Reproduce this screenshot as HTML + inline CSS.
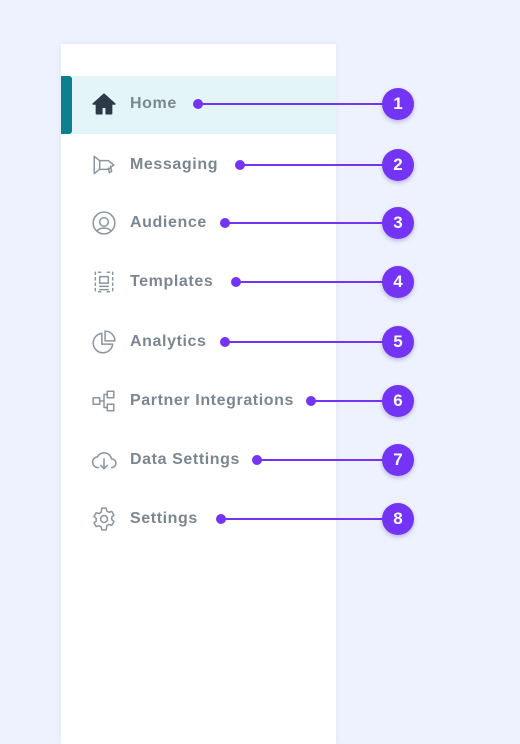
<!DOCTYPE html>
<html><head><meta charset="utf-8"><style>
*{margin:0;padding:0;box-sizing:border-box}
body{width:520px;height:731px;background:#edf2fe;position:relative;overflow:hidden;font-family:"Liberation Sans",sans-serif}
.panel{position:absolute;left:61px;top:44px;width:275px;height:700px;background:#fff;box-shadow:0 0 6px rgba(120,140,200,.12)}
.active{position:absolute;left:61px;top:76px;width:275px;height:58px;background:#e4f5fa}
.bar{position:absolute;left:61px;top:76px;width:11px;height:58px;background:#0b8190;border-radius:0 3px 3px 0}
.lbl{position:absolute;left:130px;font-size:16px;font-weight:bold;color:#7b8790;transform:translateY(-50%);letter-spacing:.6px}
.ic{position:absolute;left:91px;width:26px;height:26px;transform:translateY(-50%)}
.dot{position:absolute;width:10px;height:10px;border-radius:50%;background:#7434f5;transform:translate(-50%,-50%)}
.ln{position:absolute;height:2px;background:#7434f5;transform:translateY(-50%)}
.num{position:absolute;left:382px;width:32px;height:32px;border-radius:50%;background:#7434f5;color:#fff;font-weight:bold;font-size:17px;text-align:center;line-height:32px;transform:translateY(-50%);box-shadow:0 2px 4px rgba(80,40,160,.3)}
svg{fill:none;stroke:#8a969e;stroke-width:1.4;stroke-linecap:round;stroke-linejoin:round}
</style></head><body>
<div class="panel"></div><div class="active"></div><div class="bar"></div>

<svg class="ic" style="top:104px" viewBox="0 0 24 24"><path d="M2 12L12 3l10 9h-3v9h-5v-6h-4v6H5v-9z" fill="#2c3a47" stroke="#2c3a47"/></svg>
<div class="lbl" style="top:104px">Home</div>
<svg class="ic" style="top:165px" viewBox="0 0 24 24"><path d="M3 4v16l5-4h8l5-4-5-4H8zM8 8v8M16 15l1 4 2-1-1-5"/></svg>
<div class="lbl" style="top:165px">Messaging</div>
<svg class="ic" style="top:223px" viewBox="0 0 24 24"><circle cx="12" cy="12" r="10"/><circle cx="12" cy="11" r="4"/><path d="M6 19c2-3 10-3 12 0"/></svg>
<div class="lbl" style="top:223px">Audience</div>
<svg class="ic" style="top:282px" viewBox="0 0 24 24"><path d="M4 3v2M4 8v2M4 13v2M4 18v2M20 3v2M20 8v2M20 13v2M20 18v2M7 3h2M15 3h2M7 21h2M15 21h2"/><rect x="8" y="7" width="8" height="6"/><path d="M8 16h8M8 19h8"/></svg>
<div class="lbl" style="top:282px">Templates</div>
<svg class="ic" style="top:342px" viewBox="0 0 24 24"><path d="M10 4A9 9 0 1 0 20 14H10z"/><path d="M13 2v9h9a9 9 0 0 0-9-9z"/></svg>
<div class="lbl" style="top:342px">Analytics</div>
<svg class="ic" style="top:401px" viewBox="0 0 24 24"><rect x="2" y="9" width="6" height="6"/><rect x="15" y="3" width="6" height="6"/><rect x="15" y="15" width="6" height="6"/><path d="M8 12h4M12 6v12M12 6h3M12 18h3"/></svg>
<div class="lbl" style="top:401px">Partner Integrations</div>
<svg class="ic" style="top:460px" viewBox="0 0 24 24"><path d="M7 19a5 5 0 0 1-1-10 7 7 0 0 1 13 2 4 4 0 0 1 0 8"/><path d="M12 11v9M9 17l3 3 3-3"/></svg>
<div class="lbl" style="top:460px">Data Settings</div>
<svg class="ic" style="top:519px" viewBox="0 0 24 24"><circle cx="12" cy="12" r="3.2"/><path d="M10 2h4l.6 2.6 2 1.2 2.6-.8 2 3.4-2 1.8v2.4l2 1.8-2 3.4-2.6-.8-2 1.2L14 22h-4l-.6-2.6-2-1.2-2.6.8-2-3.4 2-1.8v-2.4l-2-1.8 2-3.4 2.6.8 2-1.2z"/></svg>
<div class="lbl" style="top:519px">Settings</div>

<div class="ln" style="left:198px;width:190px;top:104px"></div><div class="dot" style="left:198px;top:104px"></div><div class="num" style="top:104px">1</div>
<div class="ln" style="left:240px;width:148px;top:165px"></div><div class="dot" style="left:240px;top:165px"></div><div class="num" style="top:165px">2</div>
<div class="ln" style="left:225px;width:163px;top:223px"></div><div class="dot" style="left:225px;top:223px"></div><div class="num" style="top:223px">3</div>
<div class="ln" style="left:236px;width:152px;top:282px"></div><div class="dot" style="left:236px;top:282px"></div><div class="num" style="top:282px">4</div>
<div class="ln" style="left:225px;width:163px;top:342px"></div><div class="dot" style="left:225px;top:342px"></div><div class="num" style="top:342px">5</div>
<div class="ln" style="left:311px;width:77px;top:401px"></div><div class="dot" style="left:311px;top:401px"></div><div class="num" style="top:401px">6</div>
<div class="ln" style="left:257px;width:131px;top:460px"></div><div class="dot" style="left:257px;top:460px"></div><div class="num" style="top:460px">7</div>
<div class="ln" style="left:221px;width:167px;top:519px"></div><div class="dot" style="left:221px;top:519px"></div><div class="num" style="top:519px">8</div>
</body></html>
